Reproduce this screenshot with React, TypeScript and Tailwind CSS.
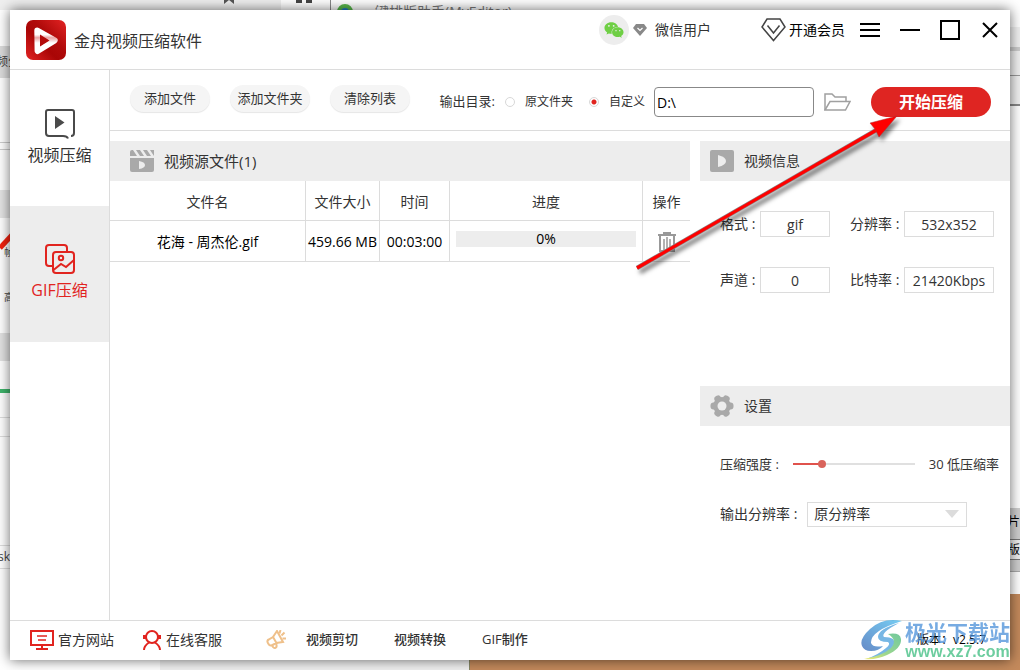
import { useState } from "react";
import type { ReactNode } from "react";
import { FaWeixin } from "react-icons/fa";

interface SourceFile {
    name: string;
    size: string;
    duration: string;
    progress: number;
}

interface FieldProps {
    id: string;
    label: string;
    value: string;
    wide?: boolean;
}

const files: SourceFile[] = [
    {
        name: "花海 - 周杰伦.gif",
        size: "459.66 MB",
        duration: "00:03:00",
        progress: 0,
    },
];

function AppLogo() {
    return (
        <svg className="size-10" viewBox="0 0 40 40">
            <defs>
                <linearGradient id="logoBg" x1="0" y1="1" x2="1" y2="0">
                    <stop offset="0" stopColor="#e32424" />
                    <stop offset="0.4" stopColor="#a90606" />
                    <stop offset="0.6" stopColor="#b00a0a" />
                    <stop offset="1" stopColor="#e32424" />
                </linearGradient>
                <linearGradient id="logoRing" x1="0" y1="0" x2="0" y2="1">
                    <stop offset="0" stopColor="#fff" />
                    <stop offset="0.2" stopColor="#fff" />
                    <stop offset="0.35" stopColor="#e9a5a5" />
                    <stop offset="0.6" stopColor="#fff" />
                    <stop offset="1" stopColor="#fff" />
                </linearGradient>
            </defs>
            <rect width="40" height="40" rx="7" fill="url(#logoBg)" />
            <path
                d="M11.3 10.6 28.7 20.4 11.6 31Z"
                fill="none"
                stroke="url(#logoRing)"
                strokeWidth="6"
                strokeLinejoin="round"
            />
            <path d="M14 14.500v12l9.500-6z" fill="#b30b0b" />
        </svg>
    );
}

function DiamondIcon() {
    return (
        <svg className="w-[25px] h-6" viewBox="0 0 25 24" fill="none" stroke="#444" strokeWidth="1.5">
            <path d="M6 1h13l5 8-11.5 13.5L1 9z" />
            <path d="M6.500 7.500 12.500 15l6-7.500" />
        </svg>
    );
}

function GemIcon() {
    return (
        <svg className="w-3.5 h-3" viewBox="0 0 14 12">
            <path d="M3 0h8l3 4-7 8-7-8z" fill="#888" />
            <path d="M4.500 4 7 6.500 9.500 4" fill="none" stroke="#fff" strokeWidth="1.200" />
        </svg>
    );
}

function VideoIcon() {
    return (
        <svg className="size-[30px]" viewBox="0 0 30 30" fill="none" stroke="#4a4a4a" strokeWidth="2">
            <path d="M26 27q3 0 3-3V3q0-2-2-2H3Q1 1 1 3v21q0 3 3 3h14q4 0 5 2.500" />
            <path d="M10 7v13l9.500-6.500z" fill="#4a4a4a" stroke="none" />
        </svg>
    );
}

function GifIcon() {
    return (
        <svg className="size-[30px]" viewBox="0 0 30 30" fill="none" stroke="#e1241f" strokeWidth="2">
            <path d="M7 22H4q-3 0-3-3V4q0-3 3-3h15q3 0 3 3v3" />
            <rect x="8" y="8" width="21" height="21" rx="3" />
            <circle cx="16" cy="14" r="2.200" />
            <path d="M8.500 26l7.500-6 5 3 8-7" />
        </svg>
    );
}

function ClapperIcon() {
    return (
        <svg className="w-6 h-[22px]" viewBox="0 0 24 22" fill="#a9a9a9">
            <path d="M2 0h1l4 6H0V2q0-2 2-2zM6 0h4l4 6h-4zM13 0h4l4 6h-4zM20 0h4v6z" />
            <path d="M0 8h24v12q0 2-2 2H2q-2 0-2-2z" />
            <path d="M9 11v8q6-1 6-4t-6-4z" fill="#ededed" />
        </svg>
    );
}

function InfoIcon() {
    return (
        <svg className="w-6 h-[22px]" viewBox="0 0 24 22">
            <rect width="24" height="22" rx="2" fill="#a9a9a9" />
            <path d="M8 5v12q8-2 8-6T8 5z" fill="#ededed" />
        </svg>
    );
}

function GearIcon() {
    return (
        <svg className="w-6 h-[22px]" viewBox="0 0 24 22" fill="#a9a9a9">
            <circle cx="12" cy="11" r="9" />
            {[0, 60, 120].map((angle) => (
                <rect
                    key={angle}
                    x="0.5"
                    y="7.5"
                    width="23"
                    height="7"
                    rx="3"
                    transform={`rotate(${angle} 12 11)`}
                />
            ))}
            <circle cx="12" cy="11" r="4.500" fill="#ededed" />
        </svg>
    );
}

function FolderIcon() {
    return (
        <svg className="w-[27px] h-[18px]" viewBox="0 0 27 18" fill="none" stroke="#a0a0a0" strokeWidth="1.500">
            <path d="M1 17V1h7l3 3h11v4" />
            <path d="M1 17 6 8.500h20L21.500 17z" />
        </svg>
    );
}

function TrashIcon() {
    return (
        <svg className="w-[18px] h-5" viewBox="0 0 18 20" fill="none" stroke="#999" strokeWidth="2">
            <path d="M0 3h18M5 1h8M2 4v15h14V4" />
            <path d="M6 7v11M9 5v13M12 7v11" strokeWidth="1.500" />
        </svg>
    );
}

function MonitorIcon() {
    return (
        <svg className="w-6 h-5" viewBox="0 0 24 20" fill="none" stroke="#e1241f" strokeWidth="2">
            <path d="M1 1h22v14H1zM12 15v4M6 19h12" />
            <path d="M7 6h10M8 10h8" strokeWidth="1.500" />
        </svg>
    );
}

function ServiceIcon() {
    return (
        <svg className="w-[18px] h-5" viewBox="0 0 18 20" fill="none" stroke="#e1241f" strokeWidth="2">
            <circle cx="9" cy="7" r="6" />
            <path d="M1 20q0-4 5-7.500M17 20q0-4-5-7.500" />
            <path d="M1.500 5v4M16.500 5v4" strokeWidth="3" />
        </svg>
    );
}

function MegaphoneIcon() {
    return (
        <svg className="size-5" viewBox="0 0 20 20" fill="none" stroke="#efc08a" strokeWidth="2">
            <path d="M7 7 11 1l6 11-7 1" />
            <path d="M7 7l3.500 6-5 2.500q-2 .500-3-1.500l-.800-1.500q-1-2 1-3z" />
            <path d="M6 15l1 2q1 1.500 2.500.800T10.500 15l-.500-2" />
            <path d="M13.500 3.500 14.500 0M15.500 5.500l3-3M16.500 8.500H20" />
        </svg>
    );
}

// Whatever is open behind the main window
function Desktop() {
    return (
        <div className="absolute inset-0 overflow-hidden bg-[#c48a5c] text-xs text-[#444]" aria-hidden="true">
            <div className="absolute left-0 top-0 h-[623px] w-[330px] bg-white shadow-[0_0_6px_#888]">
                <div className="h-2.5 w-[281px] bg-[#efefef]" />
                <div className="mt-9 flex h-8 items-center bg-[#dcdcdc]">
                    <span className="-ml-1 whitespace-nowrap">频分</span>
                </div>
                <div className="mt-16 h-2 border-y border-[#ccc]" />
                <div className="mt-10 h-7 bg-[#e4e4e4]" />
                <div className="mt-7 pl-1 text-[10px]">帧</div>
                <div className="mt-8 pl-1 text-[10px]">高</div>
                <div className="mt-7 h-7 bg-[#e2e2e2]" />
                <div className="mt-7 h-1 bg-[#3fb56b]" />
                <div className="mt-6 h-5 border-y border-[#ddd]" />
                <div className="mt-[108px] flex h-6 items-center border-y border-[#ddd]">
                    <span className="-ml-0.5">sk</span>
                </div>
            </div>
            <svg className="absolute left-0 top-[230px] h-6 w-3" viewBox="0 0 12 24">
                <path d="M0 18 12 5" stroke="#f3220f" strokeWidth="5" />
            </svg>
            <svg className="absolute left-[223px] top-0 h-1 w-3" viewBox="0 0 12 4">
                <path d="M1 0h10v4L6 0 1 4z" fill="#555" />
            </svg>
            <div className="absolute left-[296px] top-0 flex gap-1">
                <span className="h-[3px] w-1.5 bg-[#444]" />
                <span className="h-[3px] w-1.5 bg-[#444]" />
            </div>
            <div className="absolute left-[330px] right-0 top-0 h-[594px] border-l border-[#888] bg-white">
                <div className="flex items-center gap-2 pt-0.5 pl-1.5 text-sm leading-5 text-[#777]">
                    <span className="size-4 rounded-full border-4 border-[#59b84b] bg-[#247ec2]" />
                    <span>一键排版助手(MyEditor)</span>
                </div>
            </div>
            <div className="absolute right-0 top-[27px] h-[79px] w-5 border-b-2 border-[#888] bg-[#f0f0f0]">
                <div className="mt-5 h-1 bg-[#ccc]" />
                <div className="mt-6 h-px bg-[#999]" />
            </div>
            <div className="absolute right-0 top-[508px] h-16 w-5 border-b border-[#aaa] bg-[#cfcfcf] pl-2 text-black">
                <div className="h-8 border-b border-[#777] leading-7">片</div>
                <div className="h-5 border-b border-[#777] bg-[#eee] leading-5">版</div>
            </div>
            <div className="absolute bottom-0 left-0 h-[47px] w-40 bg-white" />
            <div className="absolute bottom-0 left-40 h-[47px] w-[310px] border-r border-[#886] bg-[#f0f0f0]" />
        </div>
    );
}

function Arrow() {
    return (
        <svg
            className="pointer-events-none absolute left-[630px] top-[110px] h-[170px] w-[275px] drop-shadow-[3px_4px_2px_rgba(0,0,0,0.5)]"
            viewBox="0 0 275 170"
        >
            <path d="M7 158 250 18" stroke="#888" strokeWidth="4.500" />
            <path d="M7 158 250 18" stroke="#ff0000" strokeWidth="3.200" />
            <path d="M267 6 240 13l5 6 4 8z" fill="#ff0000" stroke="#a33" strokeWidth="0.500" />
        </svg>
    );
}

function Watermark() {
    return (
        <div className="pointer-events-none absolute bottom-2.5 right-2.5 flex items-center gap-0.5 opacity-75">
            <svg className="h-10 w-[42px]" viewBox="0 0 42 40">
                <defs>
                    <linearGradient id="swirlBlue" x1="1" y1="0" x2="0" y2="1">
                        <stop offset="0" stopColor="#48bdf0" />
                        <stop offset="1" stopColor="#3465b5" />
                    </linearGradient>
                    <linearGradient id="swirlGreen" x1="1" y1="0" x2="0" y2="1">
                        <stop offset="0" stopColor="#43b77c" />
                        <stop offset="0.6" stopColor="#7bc96a" />
                        <stop offset="1" stopColor="#f5e63d" />
                    </linearGradient>
                </defs>
                <path
                    d="M41 1Q22-3 9 9-2 19 1 26q2 5 9 5 8 0 12-5-10 2-12-3Q9 11 41 1z"
                    fill="url(#swirlBlue)"
                />
                <path d="M38 3Q17 9 17 17q0 5 10 5 3 2-2 6-8 7-20 11 16-1 24-9 7-7 3-11-3-2-9-2-4-4 15-14z" fill="#4a9fdc" />
                <path
                    d="M27 14q12-2 13 5 1 9-14 16-10 5-23 4 18-3 27-11 7-8-3-14z"
                    fill="url(#swirlGreen)"
                />
            </svg>
            <div className="flex flex-col items-center">
                <span className="text-[21px] leading-6 font-bold text-[#4a90d9]">极光下载站</span>
                <span className="font-['Liberation_Sans'] text-base leading-4 font-bold text-[#3dbd80]">
                    www.xz7.com
                </span>
            </div>
        </div>
    );
}

function TitleBar() {
    return (
        <header className="flex h-[60px] shrink-0 items-start justify-between border-b border-[#dcdcdc] pl-4 pr-3">
            <div className="flex items-center gap-2 pt-2.5">
                <AppLogo />
                <h1 className="pt-0.5 text-base">金舟视频压缩软件</h1>
            </div>
            <div className="flex h-10 items-center">
                <button className="flex items-center gap-1 text-sm">
                    <span className="flex size-[30px] items-center justify-center rounded-full bg-[#ededed]">
                        <FaWeixin className="size-5 text-[#6fcf45]" />
                    </span>
                    <GemIcon />
                    <span className="ml-1">微信用户</span>
                </button>
                <button className="ml-[50px] flex items-center gap-[3px] text-sm text-black">
                    <DiamondIcon />
                    <span>开通会员</span>
                </button>
                <button className="ml-[15px] flex w-5 flex-col gap-1" aria-label="菜单">
                    <span className="h-0.5 w-full bg-black" />
                    <span className="h-0.5 w-full bg-black" />
                    <span className="h-0.5 w-full bg-black" />
                </button>
                <button className="ml-5 h-0.5 w-5 bg-black" aria-label="最小化" />
                <button className="ml-5 size-5 border-2 border-black" aria-label="最大化" />
                <button className="ml-[22px]" aria-label="关闭">
                    <svg className="size-4" viewBox="0 0 16 16" stroke="#000" strokeWidth="2">
                        <path d="M1 1l14 14M15 1 1 15" />
                    </svg>
                </button>
            </div>
        </header>
    );
}

function Sidebar() {
    return (
        <nav className="w-[100px] shrink-0 border-r border-[#dcdcdc] text-base">
            <button className="flex h-[136px] w-full flex-col items-center justify-center gap-1">
                <VideoIcon />
                <span className="leading-6">视频压缩</span>
            </button>
            <button className="flex h-[136px] w-full flex-col items-center justify-center gap-1 bg-[#ededed] pb-0.5 text-[#e1241f]">
                <GifIcon />
                <span className="leading-6">GIF压缩</span>
            </button>
        </nav>
    );
}

function Toolbar() {
    const [target, setTarget] = useState("custom");
    const [path, setPath] = useState("D:\\");

    const radio =
        "size-2.5 appearance-none rounded-full border border-[#d8d8d8] bg-white checked:bg-[radial-gradient(circle,#e1241f_2px,#fff_3px)]";

    return (
        <div className="flex h-[61px] shrink-0 items-start justify-between border-b border-[#dcdcdc] pl-5 pr-[19px]">
            <div className="flex gap-5 pt-[15px] text-[13px]">
                {["添加文件", "添加文件夹", "清除列表"].map((label) => (
                    <button
                        key={label}
                        className="h-[27px] w-20 rounded-full bg-[#f5f5f5] shadow-[0_1px_1px_rgba(0,0,0,0.1)]"
                    >
                        {label}
                    </button>
                ))}
            </div>
            <div className="flex items-center pt-[17px] text-xs">
                <span className="text-[13px]">输出目录:</span>
                <label className="ml-2.5 flex items-center gap-2.5">
                    <input
                        type="radio"
                        name="target"
                        className={radio}
                        checked={target === "source"}
                        onChange={() => setTarget("source")}
                    />
                    原文件夹
                </label>
                <label className="ml-4 flex items-center gap-2.5">
                    <input
                        type="radio"
                        name="target"
                        className={radio}
                        checked={target === "custom"}
                        onChange={() => setTarget("custom")}
                    />
                    自定义
                </label>
                <input
                    type="text"
                    aria-label="输出路径"
                    className="ml-[9px] h-[30px] w-40 rounded-sm border border-[#888] px-0.5 text-sm text-black"
                    value={path}
                    onChange={(e) => setPath(e.target.value)}
                />
                <button className="ml-2.5" aria-label="打开文件夹">
                    <FolderIcon />
                </button>
                <button className="ml-5 h-[30px] w-[120px] rounded-full bg-[#df2522] text-base font-bold text-white">
                    开始压缩
                </button>
            </div>
        </div>
    );
}

function PanelHeader({ icon, children }: { icon: ReactNode; children: ReactNode }) {
    return (
        <div className="flex h-10 items-center gap-2.5 bg-[#ededed]">
            {icon}
            {children}
        </div>
    );
}

function FileTable() {
    const head = "h-10 border-b border-r border-[#dcdcdc] pt-0.5 font-normal last:border-r-0";
    const cell = "h-[41px] border-b border-r border-[#dcdcdc] pt-0.5 last:border-r-0";

    return (
        <table className="w-full table-fixed border-separate border-spacing-0 text-center text-sm">
            <colgroup>
                <col />
                <col className="w-[74px]" />
                <col className="w-[70px]" />
                <col className="w-[193px]" />
                <col className="w-[47px]" />
            </colgroup>
            <thead>
                <tr>
                    <th className={head}>文件名</th>
                    <th className={head}>文件大小</th>
                    <th className={head}>时间</th>
                    <th className={head}>进度</th>
                    <th className={head}>操作</th>
                </tr>
            </thead>
            <tbody>
                {files.map((file) => (
                    <tr key={file.name} className="text-black">
                        <td className={cell}>{file.name}</td>
                        <td className={`${cell} whitespace-nowrap`}>{file.size}</td>
                        <td className={cell}>{file.duration}</td>
                        <td className={`${cell} px-1.5`}>
                            <div className="mb-1.5 h-4 bg-[#ededed] leading-4">
                                {file.progress}%
                            </div>
                        </td>
                        <td className={cell}>
                            <button className="mx-auto block" aria-label="删除">
                                <TrashIcon />
                            </button>
                        </td>
                    </tr>
                ))}
            </tbody>
        </table>
    );
}

function Field({ id, label, value, wide }: FieldProps) {
    return (
        <div className="flex items-center justify-between">
            <label htmlFor={id}>{label} :</label>
            <input
                id={id}
                readOnly
                value={value}
                className={`h-[26px] border border-[#dcdcdc] text-center ${wide ? "w-[90px]" : "w-[70px]"}`}
            />
        </div>
    );
}

function InfoPanel() {
    return (
        <section className="h-[245px] text-sm">
            <PanelHeader
                icon={
                    <span className="pl-2.5">
                        <InfoIcon />
                    </span>
                }
            >
                <h2>视频信息</h2>
            </PanelHeader>
            <div className="grid grid-cols-[110px_144px] gap-x-5 gap-y-[30px] pl-5 pt-[30px]">
                <Field id="format" label="格式" value="gif" />
                <Field id="resolution" label="分辨率" value="532x352" wide />
                <Field id="channel" label="声道" value="0" />
                <Field id="bitrate" label="比特率" value="21420Kbps" wide />
            </div>
        </section>
    );
}

function SettingsPanel() {
    const [strength, setStrength] = useState(30);
    const percent = ((strength - 10) / 90) * 100;

    return (
        <section className="text-sm">
            <PanelHeader
                icon={
                    <span className="pl-2.5">
                        <GearIcon />
                    </span>
                }
            >
                <h2>设置</h2>
            </PanelHeader>
            <div className="flex items-center pl-5 pt-[29px] text-[13px]">
                <label htmlFor="strength">压缩强度 :</label>
                <input
                    id="strength"
                    type="range"
                    min={10}
                    max={100}
                    value={strength}
                    onChange={(e) => setStrength(Number(e.target.value))}
                    className="ml-3.5 h-0.5 w-[122px] appearance-none [&::-webkit-slider-thumb]:size-2 [&::-webkit-slider-thumb]:appearance-none [&::-webkit-slider-thumb]:rounded-full [&::-webkit-slider-thumb]:bg-[#d9635b]"
                    style={{
                        background: `linear-gradient(to right, #e0524c ${percent}%, #e0e0e0 ${percent}%)`,
                    }}
                />
                <span className="ml-3.5 whitespace-nowrap">{strength} 低压缩率</span>
            </div>
            <div className="flex items-center gap-2.5 pl-5 pt-7">
                <label htmlFor="output">输出分辨率 :</label>
                <div className="relative">
                    <select
                        id="output"
                        className="h-[25px] w-40 appearance-none border border-[#dcdcdc] bg-white pl-1.5"
                    >
                        <option>原分辨率</option>
                    </select>
                    <svg className="pointer-events-none absolute right-2 top-2 h-2 w-3.5" viewBox="0 0 14 8">
                        <path d="M0 0h14L7 8z" fill="#dcdcdc" />
                    </svg>
                </div>
            </div>
        </section>
    );
}

function Footer() {
    return (
        <footer className="flex h-10 shrink-0 items-center border-t border-[#dcdcdc] pb-0.5 pl-5 pr-6 text-sm">
            <a href="#site" className="flex items-center gap-1">
                <MonitorIcon />
                官方网站
            </a>
            <a href="#service" className="ml-[29px] flex items-center gap-[5px]">
                <ServiceIcon />
                在线客服
            </a>
            <div className="ml-11 flex items-center text-[13px] font-medium">
                <MegaphoneIcon />
                <a href="#cut" className="ml-5">
                    视频剪切
                </a>
                <a href="#convert" className="ml-9">
                    视频转换
                </a>
                <a href="#gif" className="ml-9">
                    GIF制作
                </a>
            </div>
            <span className="ml-auto text-xs text-black">版本：v2.5.7</span>
        </footer>
    );
}

export default function App() {
    return (
        <div className="relative flex h-screen p-2.5 font-['Open_Sans','Noto_Sans_CJK_SC',sans-serif] text-[#333]">
            <Desktop />
            <main className="relative flex min-w-0 flex-1 flex-col bg-white shadow-[0_0_12px_rgba(0,0,0,0.6)]">
                <TitleBar />
                <div className="flex min-h-0 flex-1">
                    <Sidebar />
                    <div className="flex min-w-0 flex-1 flex-col">
                        <Toolbar />
                        <div className="flex flex-1 gap-2.5 pt-2.5">
                            <section className="min-w-0 flex-1">
                                <PanelHeader
                                    icon={
                                        <span className="pl-5">
                                            <ClapperIcon />
                                        </span>
                                    }
                                >
                                    <h2 className="text-[15px]">视频源文件({files.length})</h2>
                                </PanelHeader>
                                <FileTable />
                            </section>
                            <aside className="w-[310px] shrink-0">
                                <InfoPanel />
                                <SettingsPanel />
                            </aside>
                        </div>
                    </div>
                </div>
                <Footer />
            </main>
            <Watermark />
            <Arrow />
        </div>
    );
}
